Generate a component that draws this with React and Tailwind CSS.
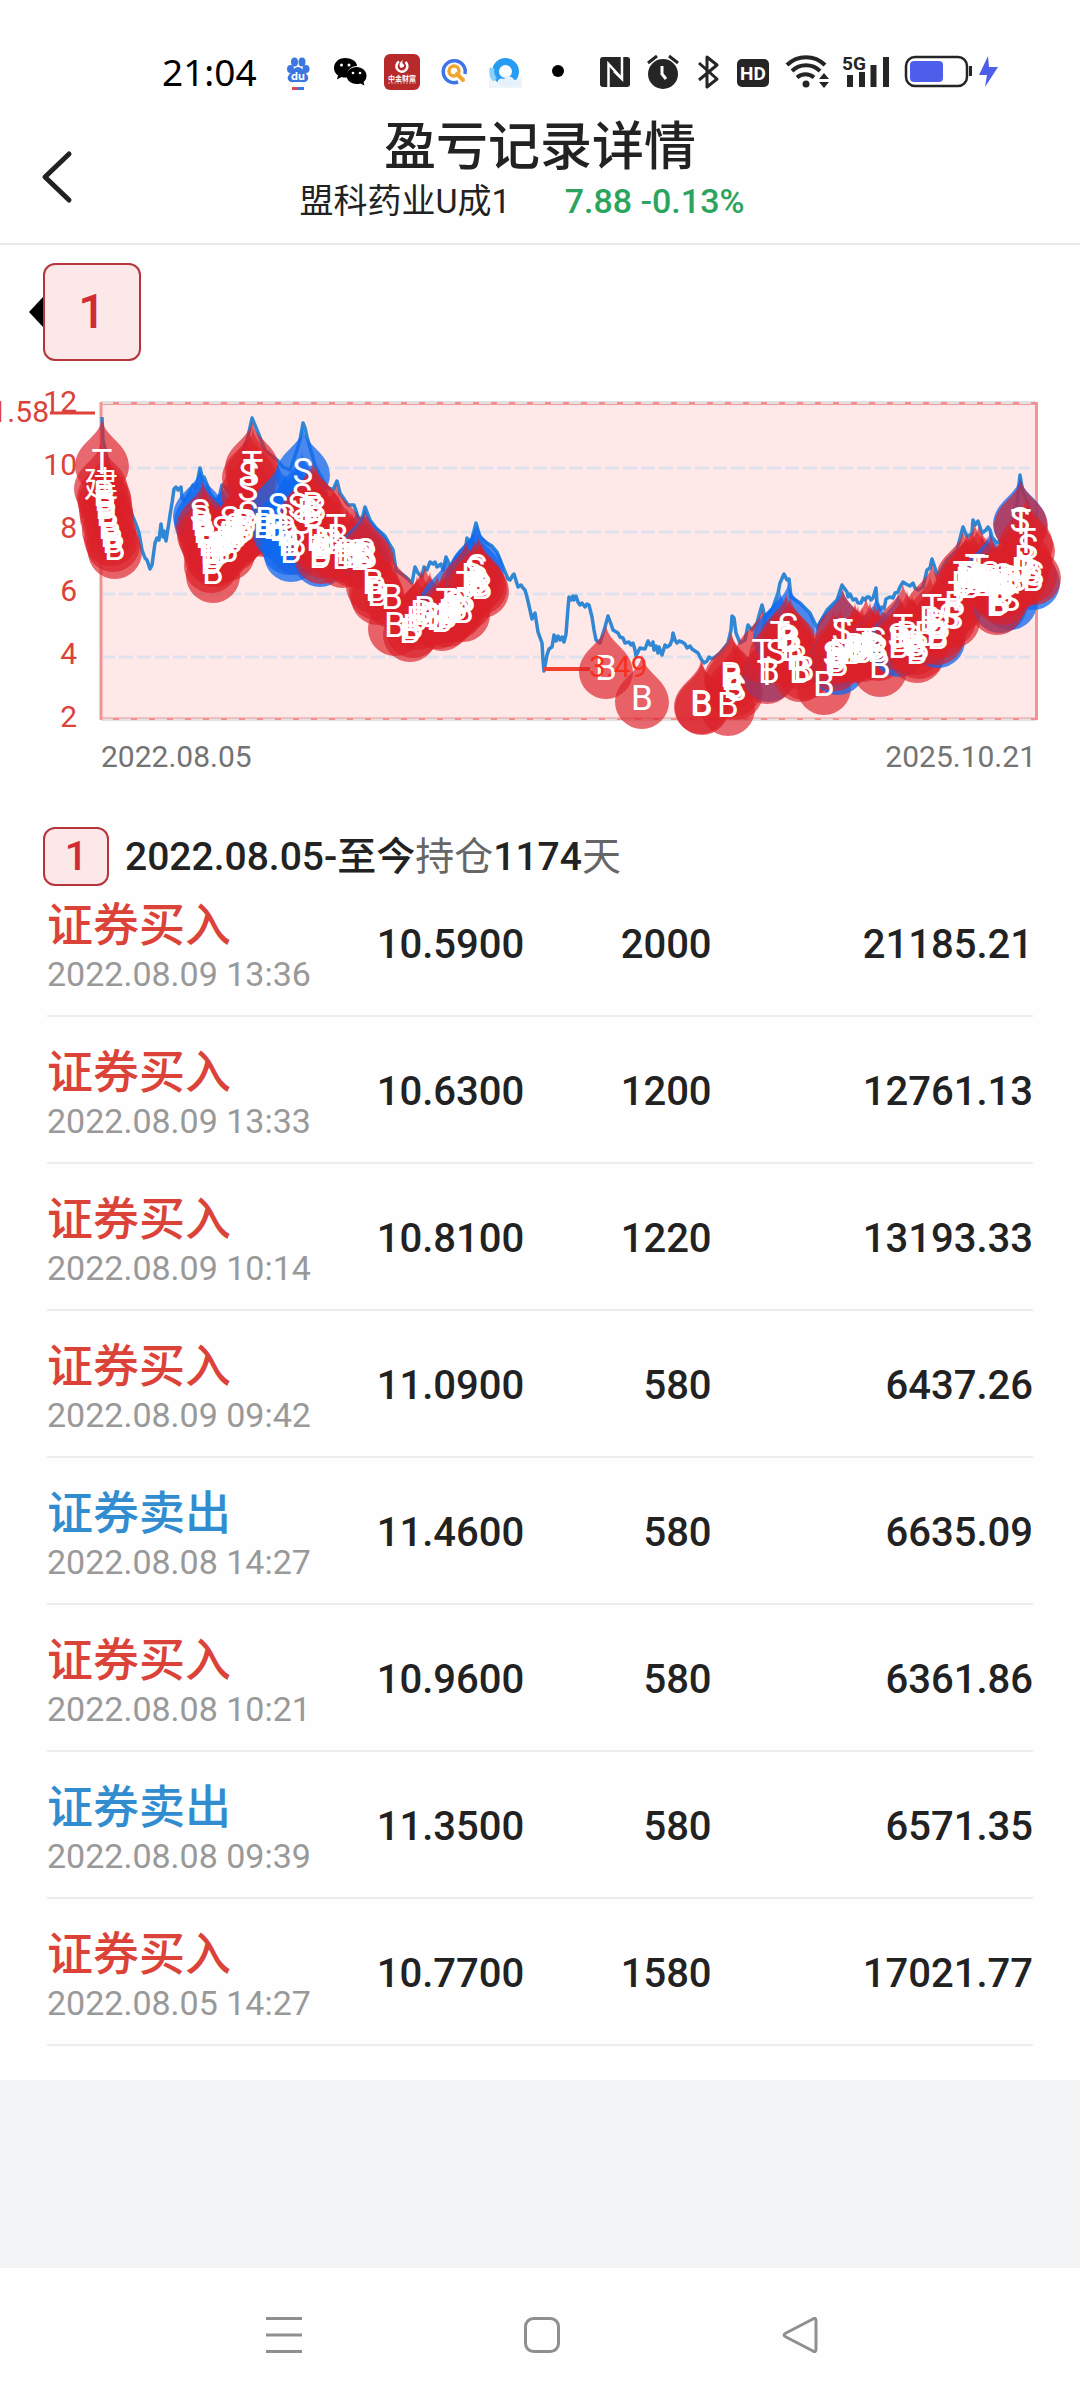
import React from "react";

const records = [
  ["buy", "2022.08.09 13:36", "10.5900", "2000", "21185.21"],
  ["buy", "2022.08.09 13:33", "10.6300", "1200", "12761.13"],
  ["buy", "2022.08.09 10:14", "10.8100", "1220", "13193.33"],
  ["buy", "2022.08.09 09:42", "11.0900", "580", "6437.26"],
  ["sell", "2022.08.08 14:27", "11.4600", "580", "6635.09"],
  ["buy", "2022.08.08 10:21", "10.9600", "580", "6361.86"],
  ["sell", "2022.08.08 09:39", "11.3500", "580", "6571.35"],
  ["buy", "2022.08.05 14:27", "10.7700", "1580", "17021.77"],
];

const price =
  "102,417 103,440 108,462 115,490 122,500 130,510 135,522 137,527 139,533 142,550 145,558 147,560 150,569 152,565 155,543 157,538 159,540 161,524 162,532 163,537 164,531 166,541 169,522 170,515 172,503 174,489 176,487 178,490 181,487 182,498 184,501 188,495 193,485 195,488 197,483 200,468 203,480 204,477 208,487 211,496 217,502 219,498 222,485 226,488 233,497 240,487 245,445 247,440 249,432 252,418 257,430 265,450 277,460 283,467 290,470 297,450 300,440 303,423 305,428 307,437 315,465 320,475 327,487 333,490 337,481 340,493 348,505 354,505 358,517 362,520 365,507 370,520 376,528 385,536 390,545 393,550 396,570 403,575 407,578 412,583 415,567 418,573 422,577 424,567 427,570 430,562 433,564 435,562 437,567 441,564 443,570 446,557 452,570 460,557 465,552 467,538 471,543 476,523 480,537 487,543 492,546 497,552 503,567 508,579 510,580 513,575 514,574 518,587 521,585 523,588 525,590 527,597 530,610 532,619 535,613 538,632 542,643 543,660 544,671 547,655 549,649 552,647 554,635 556,641 558,636 560,640 562,637 564,642 566,634 568,608 569,597 571,600 573,596 574,600 576,596 578,602 580,605 582,603 585,607 587,604 589,605 592,617 594,630 596,640 600,643 605,627 608,616 611,624 613,630 618,633 620,637 623,638 625,643 629,642 631,645 633,643 635,650 636,656 640,648 645,649 648,641 650,645 652,645 653,642 654,650 656,646 658,653 659,647 662,655 665,645 667,647 670,645 672,640 673,633 675,640 677,643 679,641 682,642 685,644 687,648 690,646 692,649 698,653 701,659 704,663 707,661 709,657 712,659 715,657 720,653 728,643 731,630 732,616 734,618 736,633 740,643 745,640 748,625 752,630 757,623 760,612 762,605 765,617 772,610 778,593 780,583 784,574 787,580 789,579 791,597 800,603 810,613 817,628 827,610 837,600 842,585 847,592 848,597 850,594 853,600 856,599 858,603 861,603 863,598 865,600 867,597 869,597 871,600 873,598 876,588 877,602 880,610 882,607 884,609 886,599 890,597 893,598 895,593 898,592 900,587 903,582 906,584 910,586 913,583 915,588 918,590 923,587 927,570 930,568 932,559 935,568 937,577 947,560 957,550 963,527 967,537 972,533 973,520 975,525 978,521 982,533 986,530 988,527 990,530 992,537 997,543 1007,537 1014,520 1017,503 1020,475 1023,493 1028,503 1033,527";

// Trade markers: x, y of the tip, letter, and an optional "b" for a blue drop.
const markers = [
  [115, 504, "B"], [113, 497, "B"], [111, 491, "B"], [109, 483, "B"], [107, 470, "B"], [106, 463, "B"], [105, 455, "B"], [104, 450, "B"], [101, 441, "建"], [102, 418, "T"],
  [200, 468, "S", "b"], [201, 474, "B", "b"], [222, 485, "S", "b"], [230, 475, "S", "b"], [235, 482, "S", "b"],
  [203, 480, "B"], [204, 487, "B"], [206, 492, "B"], [209, 500, "B"], [211, 508, "B"], [211, 518, "B"], [213, 528, "B"], [215, 512, "B"], [220, 508, "B"], [219, 501, "B"], [223, 500, "B"], [226, 495, "B"], [228, 506, "B"], [230, 490, "B"], [232, 497, "B"], [236, 492, "B"], [234, 486, "B"], [240, 488, "B"], [242, 480, "B"], [244, 485, "B"], [246, 478, "B"], [248, 470, "S"],
  [248, 445, "S"], [249, 430, "S"], [253, 428, "T"], [252, 420, "T"],
  [264, 482, "B"], [266, 476, "B"], [274, 483, "B"], [296, 500, "B"],
  [278, 462, "S", "b"], [285, 473, "S", "b"], [280, 485, "B", "b"], [287, 490, "B", "b"], [291, 507, "B", "b"], [289, 500, "B", "b"], [303, 427, "S", "b"], [302, 452, "S", "b"], [298, 462, "S", "b"], [302, 478, "S", "b"],
  [320, 512, "B", "b"], [308, 467, "B"], [313, 471, "B"], [316, 465, "B"], [317, 495, "B"], [322, 503, "B"], [321, 509, "B"], [325, 498, "B"], [313, 461, "B"], [332, 498, "B"],
  [357, 508, "S", "b"], [336, 483, "T"], [338, 493, "B"], [343, 513, "B"], [347, 508, "B"], [352, 512, "B"], [361, 514, "B"], [365, 507, "S", "b"], [367, 512, "B"], [364, 511, "B"],
  [373, 538, "B"], [376, 545, "B"], [378, 550, "B"], [392, 553, "B"], [395, 581, "B"], [410, 587, "B"], [413, 583, "B"], [417, 575, "B"], [421, 569, "B"], [425, 565, "B"], [430, 571, "B"],
  [446, 557, "T", "b"], [450, 565, "S", "b"], [437, 574, "B"], [442, 576, "B"], [447, 572, "B"], [449, 568, "B"], [452, 567, "B"], [457, 564, "B"], [459, 558, "B"], [463, 567, "B"], [465, 556, "B"], [454, 560, "S"],
  [477, 523, "S", "b"], [475, 526, "S", "b"], [472, 532, "B", "b"], [466, 540, "T"], [474, 540, "B"], [478, 536, "B"], [482, 543, "B"], [480, 540, "B"],
  [606, 624, "B"], [642, 654, "B"], [701, 659, "B"], [702, 660, "B"], [728, 661, "B"], [731, 631, "B"], [732, 634, "B"], [734, 642, "B"], [736, 645, "S"],
  [769, 627, "B", "b"], [762, 608, "T"], [767, 629, "T"], [780, 590, "T", "b"], [788, 582, "S", "b"], [776, 608, "S"], [786, 593, "B"], [790, 596, "B"], [792, 605, "B"], [797, 614, "B"], [800, 627, "B"], [804, 625, "B"],
  [824, 640, "B"], [842, 587, "S", "b"], [838, 620, "B", "b"], [836, 612, "B", "b"], [843, 588, "T"], [833, 610, "S"], [835, 616, "B"], [840, 608, "B"],
  [853, 608, "B"], [855, 602, "B"], [858, 605, "B"], [862, 607, "B"], [876, 596, "S", "b"], [866, 597, "T"], [870, 601, "B"], [875, 603, "B"], [878, 606, "B"], [880, 622, "B"],
  [898, 592, "S", "b"], [899, 602, "B", "b"], [903, 583, "T"], [901, 596, "B"], [907, 590, "B"], [912, 594, "B"], [917, 608, "B"], [919, 604, "B"], [915, 600, "B"],
  [938, 593, "B", "b"], [932, 563, "T"], [930, 575, "B"], [935, 578, "B"], [925, 590, "B"], [937, 590, "B"], [940, 583, "B"], [947, 567, "T"], [949, 572, "S"], [953, 573, "S"], [955, 560, "B"],
  [958, 550, "T"], [963, 530, "T"], [966, 536, "B"], [975, 523, "T"], [979, 524, "T"], [970, 542, "B"], [976, 537, "B"], [982, 533, "B"], [962, 540, "B"], [972, 530, "B"], [984, 540, "B"], [967, 532, "B"], [987, 536, "B"],
  [1000, 558, "B", "b"], [1010, 555, "S", "b"], [990, 530, "S", "b"], [1020, 476, "S", "b"], [1033, 535, "B", "b"], [997, 560, "B"], [993, 540, "B"], [991, 534, "B"], [998, 545, "S"], [1003, 550, "B"], [1000, 538, "B"], [1007, 540, "S"], [1012, 537, "B"], [1003, 532, "S"], [1009, 534, "B"], [1017, 535, "B"],
  [1021, 478, "T"], [1026, 497, "T"], [1028, 503, "S"], [1025, 514, "B"], [1030, 528, "B"], [1034, 530, "S"], [1022, 526, "B"],
];

const DROP = "M0 0C1 19 26 24 27 48A26.5 26.5 0 0 1-27 48C-26 24-1 19 0 0Z";

function Chart() {
  return (
    <svg className="block w-full" viewBox="0 370 1080 420" role="img" aria-label="股价走势与买卖点" fontFamily="Roboto, 'Noto Sans CJK SC', sans-serif">
      <rect x="101" y="403" width="935" height="316" fill="#fee8e8" />
      <g stroke="#dfe2ec" strokeWidth="3" strokeDasharray="14 4">
        {[468, 532, 594, 657].map((y) => <path key={y} d={`M101 ${y}H1030`} />)}
      </g>
      <path d="M101 402.500H1036M101 719.500H1036" stroke="#e3e0e2" strokeWidth="3" />
      <path d="M101 403H1036M101 719H1036" stroke="#f58d8d" strokeWidth="2" strokeDasharray="6 12" strokeDashoffset="-12" />
      <path d="M101 404.500H1036M101 718H1036" stroke="#f09a9a" strokeWidth="1" />
      <path d="M101 402V720M1036.500 402V720" stroke="#f49393" strokeWidth="3" />
      <polyline points={price} fill="none" stroke="#3088d4" strokeWidth="3.500" strokeLinejoin="round" />
      <g fill="#d9433a" fontSize="30" textAnchor="end">
        {[12, 10, 8, 6, 4, 2].map((n, i) => <text key={n} x="77" y={412 + i * 63}>{n}</text>)}
        <text x="49" y="422">11.58</text>
      </g>
      <path d="M50 413H95" stroke="#e04138" strokeWidth="3" />
      <path d="M544 669H590" stroke="#f4412f" strokeWidth="4" />
      {markers.map(([x, y, , tone], i) => (
        <path key={i} d={DROP} transform={`translate(${x} ${y})`} fill={tone ? "#0f68f0" : "#dc2029"} opacity={tone ? 0.75 : 0.68} />
      ))}
      <g fill="#fff" fontSize="35" textAnchor="middle">
        {markers.map(([x, y, letter], i) => <text key={i} x={x} y={y + 56}>{letter}</text>)}
      </g>
      <text x="589" y="677" fontSize="30" fill="#fa2f22">3.49</text>
      <g fill="#737373" fontSize="30">
        <text x="101" y="767">2022.08.05</text>
        <text x="1036" y="767" textAnchor="end">2025.10.21</text>
      </g>
    </svg>
  );
}

function Slot({ x, w, label, children }) {
  return <svg role="img" aria-label={label} className="h-16 shrink-0" width={w} height="64" viewBox={`${x} 39 ${w} 64`}>{children}</svg>;
}

function StatusBar() {
  return (
    <div className="flex h-[103px] items-end pl-[162px]">
      <time className="flex h-16 w-[114px] shrink-0 items-center font-['Noto_Sans',sans-serif] text-[37px] leading-none text-black">21:04</time>
      <Slot x={276} w={46} label="百度">
        <g fill="#3c76e0">
          <ellipse cx="290.500" cy="69" rx="3.500" ry="4" /><ellipse cx="294.500" cy="62" rx="3.500" ry="4.500" /><ellipse cx="302" cy="62" rx="3.500" ry="4.500" /><ellipse cx="306" cy="69" rx="3.500" ry="4" />
          <path d="M298 67c4 0 5 4 8 6.500 5 5 1 9.500-4 8.500h-8c-5 1-9-3.500-4-8.500 3-2.500 4-6.500 8-6.500z" />
        </g>
        <text x="298" y="80" fontSize="11" fontWeight="700" fontFamily="Inter, sans-serif" fill="#fff" textAnchor="middle">du</text>
        <path d="M292 88.500h6" stroke="#dc4b55" strokeWidth="3" /><path d="M298 88.500h6" stroke="#3c76e0" strokeWidth="3" />
      </Slot>
      <Slot x={322} w={54} label="微信">
        <path d="M345 58c-6 0-11 4-11 10 0 3 1.500 5.500 4 7.500l-1 4 4.500-2.500c2 .6 4 .6 6 .3C346 70 351 66 357 66c0-5-6-8-12-8z" />
        <path d="M356.500 67c-5.500 0-10 3.700-10 8.500s4.500 8.500 10 8.500c1.500 0 2.700-.2 4-.6l4 2-1-3.500c2-1.500 3-3.500 3-6.400 0-4.800-4.500-8.500-10-8.500z" />
        <g fill="#fff"><circle cx="341.500" cy="65" r="1.500" /><circle cx="349" cy="65" r="1.500" /><circle cx="353" cy="73" r="1.300" /><circle cx="360" cy="73" r="1.300" /></g>
      </Slot>
      <Slot x={376} w={54} label="中金财富">
        <rect x="384" y="54" width="36" height="36" rx="6" fill="#b72a2c" />
        <path d="M399 61.500a5.500 5.500 0 1 0 6.500.5" fill="none" stroke="#fff" strokeWidth="2.500" />
        <path d="M403 60c-3 2-5 5-2 8 4-1 4-3 2-4-1-1-1-2 0-4z" fill="#fff" />
        <text x="402" y="81" fontSize="7" fontWeight="700" fontFamily="'Noto Sans CJK SC', sans-serif" fill="#fff" textAnchor="middle">中金财富</text>
        <path d="M388 83h28" stroke="#e9a8a8" strokeWidth="1" strokeDasharray="2 1" />
      </Slot>
      <Slot x={430} w={48} label="搜索">
        <path d="M458 82a11 11 0 1 1 7-8" fill="none" stroke="#3f73e8" strokeWidth="3.500" />
        <circle cx="454" cy="71" r="5" fill="none" stroke="#f0a52c" strokeWidth="3.500" /><path d="M457 74l6 6" stroke="#f0a52c" strokeWidth="4" strokeLinecap="round" />
      </Slot>
      <Slot x={478} w={58} label="浏览器">
        <path d="M489 76h33v12h-33z" fill="#edf5fb" />
        <circle cx="505.500" cy="71.500" r="10" fill="none" stroke="#289bf3" strokeWidth="7" />
        <path d="M495 80a14 14 0 0 1-3-12" fill="none" stroke="#8cd1fa" strokeWidth="5" />
        <path d="M499 85c-4-4 1-8 5-6 3-4 9-3 10 1 5-1 8 4 4 6h-17z" fill="#e5f1fb" />
      </Slot>
      <Slot x={536} w={44} label="更多通知"><circle cx="558" cy="71" r="6" /></Slot>
      <Slot x={580} w={58} label="NFC">
        <rect x="600" y="57" width="30" height="30" rx="3" fill="#252525" />
        <path d="M608.500 87V64l12 13M622 57v22l-8-8" fill="none" stroke="#fff" strokeWidth="2.500" />
      </Slot>
      <Slot x={638} w={50} label="闹钟">
        <circle cx="663" cy="74" r="15" fill="#252525" />
        <path d="M648 63l9-7M678 63l-9-7" stroke="#252525" strokeWidth="3" /><path d="M662 66v8l4 5" fill="none" stroke="#fff" strokeWidth="3" />
      </Slot>
      <Slot x={688} w={40} label="蓝牙"><path d="M699 63l18 16-10 8V57l10 8-18 15" fill="none" stroke="#252525" strokeWidth="3" strokeLinejoin="round" /></Slot>
      <Slot x={728} w={49} label="高清通话">
        <rect x="737" y="59" width="32" height="28" rx="5" fill="#252525" />
        <text x="753" y="80" fontSize="19" fontWeight="700" fontFamily="Roboto, sans-serif" fill="#fff" textAnchor="middle">HD</text>
      </Slot>
      <Slot x={777} w={59} label="无线网络">
        <g fill="none" stroke="#252525" strokeWidth="4"><path d="M787 65a27 27 0 0 1 38 0M792 71a20 20 0 0 1 28 0M797 77.500a13 13 0 0 1 17 0" /></g>
        <circle cx="806" cy="84" r="3.500" fill="#252525" /><path d="M819 79l5-6 5 6zM819 82l5 6 5-6z" fill="#252525" />
      </Slot>
      <Slot x={836} w={61} label="5G 信号">
        <text x="842" y="70" fontSize="19" fontWeight="700" fontFamily="Roboto, sans-serif" fill="#252525">5G</text>
        <path d="M850 75v12M862 72v15M873.500 65v22M886 57v30" stroke="#252525" strokeWidth="6" />
      </Slot>
      <Slot x={897} w={78} label="电池">
        <rect x="906" y="57" width="61" height="29" rx="9" fill="none" stroke="#252525" strokeWidth="2.500" />
        <rect x="910" y="61" width="33" height="21" rx="4" fill="#4d5eea" /><path d="M970.500 66v10" stroke="#252525" strokeWidth="3" />
      </Slot>
      <Slot x={975} w={28} label="充电中"><path d="M988 56l-9 19h8l-2 12 13-20h-9z" fill="#4d5eea" /></Slot>
    </div>
  );
}

export default function App() {
  return (
    <div className="flex min-h-screen flex-col bg-[#fefefe] font-[Roboto,'Noto_Sans_CJK_SC',sans-serif] text-[#222]">
      <StatusBar />
      <header className="flex h-[142px] items-start border-b-2 border-[#e8e8e8]">
        <button type="button" aria-label="返回" className="mt-[42px] ml-8 flex h-16 w-12 shrink-0 items-center justify-center">
          <svg width="36" height="54" viewBox="0 0 36 54" fill="none" stroke="#222" strokeWidth="5" strokeLinecap="round" strokeLinejoin="round"><path d="M31 4L7 27L31 50" /></svg>
        </button>
        <div className="flex grow flex-col items-center pt-4 pr-20">
          <h1 className="text-[52px] leading-[58px] font-medium">盈亏记录详情</h1>
          <p className="flex gap-[54px] pr-9 text-[34px] leading-[48px]">
            <span>盟科药业U成1</span>
            <span className="font-medium text-[#2ba55d]">7.88 -0.13%</span>
          </p>
        </div>
      </header>
      <main>
        <div className="flex items-center pt-[18px] pb-[9px] pl-7">
          <svg width="15" height="30" viewBox="0 0 15 30" aria-hidden="true"><path d="M15 0L1 15L15 30Z" /></svg>
          <button type="button" className="flex h-[98px] w-[98px] items-center justify-center rounded-xl border-2 border-[#b5353b] bg-[#fce8e8] text-[48px] font-medium text-[#cf2c35]">1</button>
        </div>
        <Chart />
        <section className="px-[43px]">
          <h2 className="mt-[37px] flex items-center gap-4">
            <span className="flex h-[59px] w-[66px] items-center justify-center rounded-xl border-2 border-[#b5353b] bg-[#fce8e8] text-[40px] font-medium text-[#cf2c35]">1</span>
            <span className="text-[39px] leading-[58px] font-medium">2022.08.05-至今<span className="font-normal text-[#666]">持仓</span>1174<span className="font-normal text-[#666]">天</span></span>
          </h2>
          <div className="-mt-4 px-1">
            <table className="w-full table-fixed border-collapse" aria-label="交易记录">
              <colgroup><col className="w-[32%]" /><col className="w-[16%]" /><col className="w-[19%]" /><col className="w-[33%]" /></colgroup>
              <tbody>
                {records.map(([side, time, cost, qty, total]) => (
                  <tr key={time} className="border-b-2 border-[#ededed]">
                    <td className="p-0 pt-7 pb-[19px] whitespace-nowrap">
                      <div className={side === "buy" ? "text-[46px] leading-[54px] font-medium text-[#dc4338]" : "text-[46px] leading-[54px] font-medium text-[#318dd0]"}>{side === "buy" ? "证券买入" : "证券卖出"}</div>
                      <div className="text-[34px] leading-[44px] text-[#999]">{time}</div>
                    </td>
                    <td className="p-0 pt-1 text-right text-[40px] leading-[52px] font-medium"><span className="-mr-1">{cost}</span></td>
                    <td className="p-0 pt-1 text-right text-[40px] leading-[52px] font-medium"><span className="-mr-1">{qty}</span></td>
                    <td className="p-0 pt-1 text-right text-[40px] leading-[52px] font-medium">{total}</td>
                  </tr>
                ))}
              </tbody>
            </table>
          </div>
        </section>
      </main>
      <div className="mt-[34px] min-h-[188px] grow bg-[#f2f4f6]" />
      <nav className="flex h-[133px] items-center justify-center gap-[222px] pl-1 text-[#8f8f8f]">
        <button type="button" aria-label="最近任务"><svg width="36" height="36" viewBox="0 0 36 36" stroke="currentColor" strokeWidth="3"><path d="M0 1.500H36M0 18H36M0 34.500H36" /></svg></button>
        <button type="button" aria-label="主页"><svg width="36" height="36" viewBox="0 0 36 36" fill="none" stroke="currentColor" strokeWidth="3"><rect x="1.500" y="1.500" width="33" height="33" rx="8" /></svg></button>
        <button type="button" aria-label="返回上一页"><svg width="36" height="36" viewBox="0 0 36 36" fill="none" stroke="currentColor" strokeWidth="3" strokeLinejoin="round"><path d="M31 2Q34 0 34 4V32Q34 36 31 34L4 20Q0 18 4 16Z" /></svg></button>
      </nav>
    </div>
  );
}
